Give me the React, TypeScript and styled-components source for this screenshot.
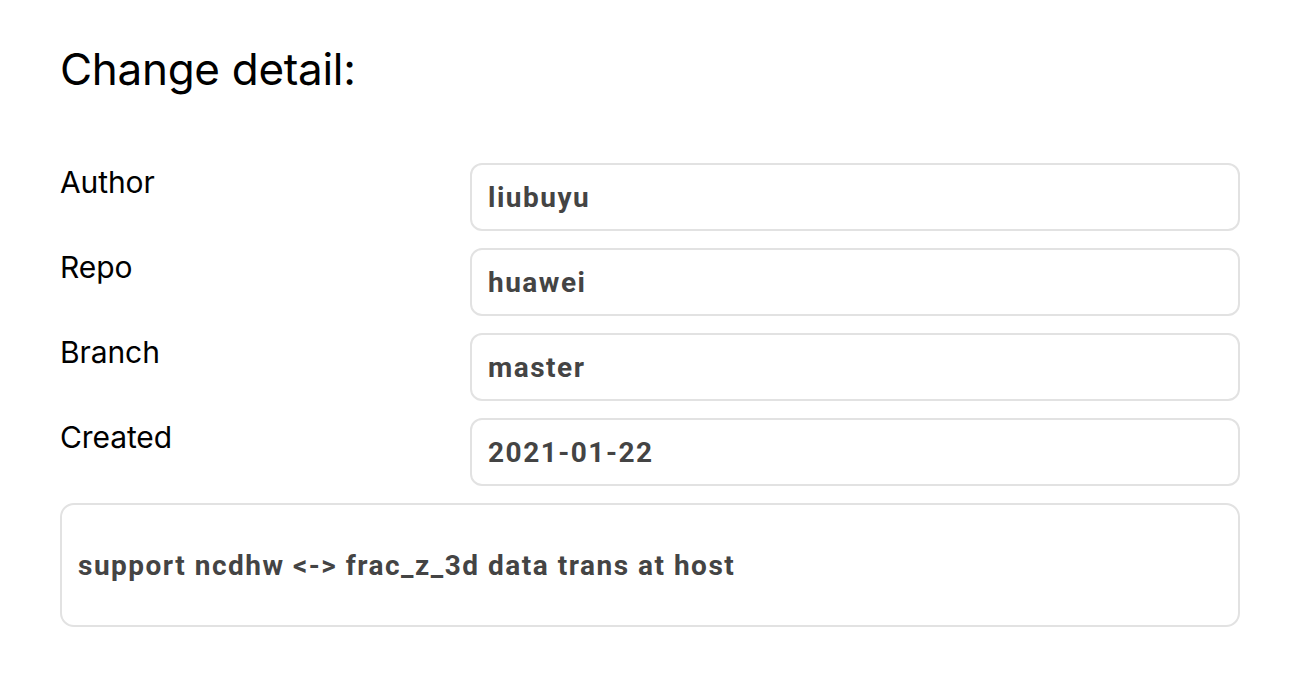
import React from "react";
import styled, { createGlobalStyle } from "styled-components";

const Global = createGlobalStyle`
  html, body { margin: 0; padding: 0; background: #fff; }
  body { font-family: Inter, "Noto Sans", sans-serif; color: #000; }
`;

const Page = styled.div`
  padding: 44px 66px 0 60px;
  display: flex;
  flex-direction: column;
`;

const Title = styled.h1`
  margin: 0 0 69px;
  font-family: Inter, sans-serif;
  font-weight: 400;
  font-size: 44px;
  line-height: 50px;
  letter-spacing: -0.3px;
`;

const Rows = styled.div`
  display: flex;
  flex-direction: column;
  gap: 17px;
`;

const Row = styled.div`
  display: grid;
  grid-template-columns: 410px 1fr;
  align-items: start;
`;

const Label = styled.div`
  font-family: Inter, sans-serif;
  font-size: 30px;
  line-height: 38px;
  letter-spacing: -0.1px;
`;

const Field = styled.div<{ $tall?: boolean }>`
  box-sizing: border-box;
  height: ${(p) => (p.$tall ? "124px" : "68px")};
  border: 2px solid #e2e2e2;
  border-radius: ${(p) => (p.$tall ? "14px" : "12px")};
  display: flex;
  align-items: center;
  padding: 0 16px;
  font-family: Roboto, sans-serif;
  font-weight: 700;
  font-size: 28px;
  letter-spacing: 1.5px;
  color: #444;
`;

const Note = styled(Field)`
  margin-top: 17px;
`;

const data = [
  ["Author", "liubuyu"],
  ["Repo", "huawei"],
  ["Branch", "master"],
  ["Created", "2021-01-22"],
];

export default function App() {
  return (
    <>
      <Global />
      <Page>
        <Title>Change detail:</Title>
        <Rows>
          {data.map(([k, v]) => (
            <Row key={k}>
              <Label>{k}</Label>
              <Field>{v}</Field>
            </Row>
          ))}
        </Rows>
        <Note $tall>support ncdhw &lt;-&gt; frac_z_3d data trans at host</Note>
      </Page>
    </>
  );
}
